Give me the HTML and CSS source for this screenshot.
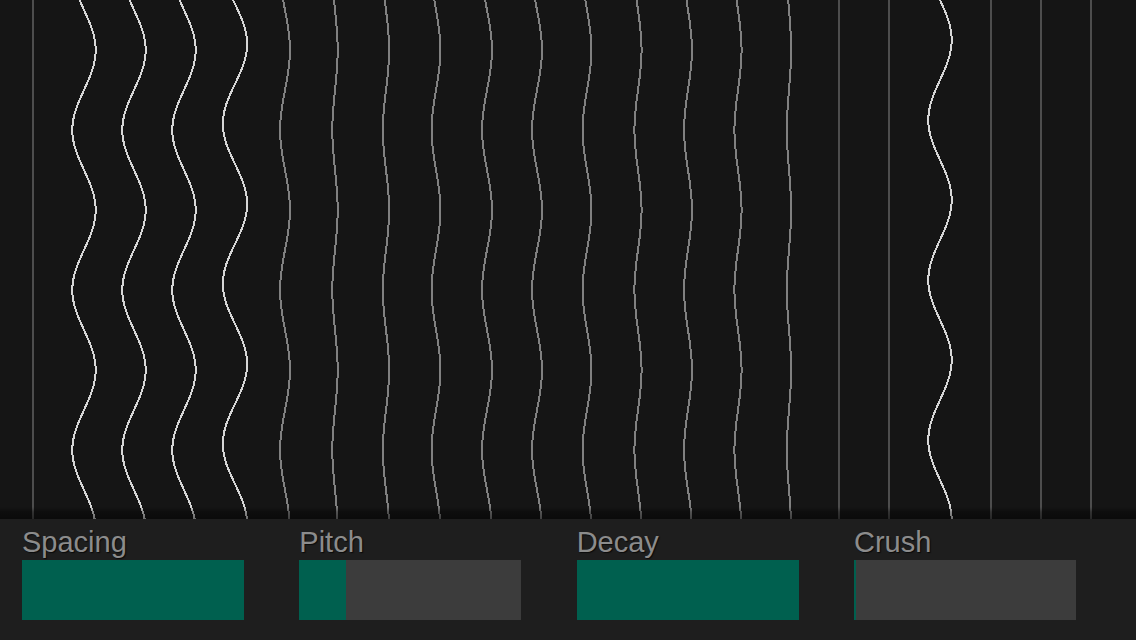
FILE: index.html
```html
<!DOCTYPE html>
<html>
<head>
<meta charset="utf-8">
<link rel="stylesheet" href="styles.css">
</head>
<body>
<div class="app">
  <div class="viz">
    <svg class="lines" width="1136" height="519" viewBox="0 0 1136 519" shape-rendering="crispEdges">
      <defs>
        <path id="w" fill="none" stroke-width="2" vector-effect="non-scaling-stroke"
          d="M0,-150 c5.123,13.04 10,25.52 10,40 s-4.877,26.96 -10,40 s-10,25.52 -10,40 s4.877,26.96 10,40
             s10,25.52 10,40 s-4.877,26.96 -10,40 s-10,25.52 -10,40 s4.877,26.96 10,40
             s10,25.52 10,40 s-4.877,26.96 -10,40 s-10,25.52 -10,40 s4.877,26.96 10,40
             s10,25.52 10,40 s-4.877,26.96 -10,40 s-10,25.52 -10,40 s4.877,26.96 10,40
             s10,25.52 10,40 s-4.877,26.96 -10,40 s-10,25.52 -10,40 s4.877,26.96 10,40"/>
      </defs>
      <g class="flat" stroke-width="2">
        <line x1="33" y1="0" x2="33" y2="519"/>
        <line x1="839" y1="0" x2="839" y2="519"/>
        <line x1="889" y1="0" x2="889" y2="519"/>
        <line x1="991" y1="0" x2="991" y2="519"/>
        <line x1="1041" y1="0" x2="1041" y2="519"/>
        <line x1="1091" y1="0" x2="1091" y2="519"/>
      </g>
      <g class="bright">
        <use href="#w" transform="translate(84,0) scale(1.17,1)"/>
        <use href="#w" transform="translate(134,0) scale(1.17,1)"/>
        <use href="#w" transform="translate(184,0) scale(1.17,1)"/>
        <use href="#w" transform="translate(235,-6) scale(1.22,1)"/>
        <use href="#w" transform="translate(940,-10) scale(1.17,1)"/>
      </g>
      <g class="mid">
        <use href="#w" transform="translate(285,0) scale(0.5,1)"/>
        <use href="#w" transform="translate(335,0) scale(0.27,1)"/>
        <use href="#w" transform="translate(386,0) scale(0.32,1)"/>
        <use href="#w" transform="translate(436,0) scale(0.45,1)"/>
        <use href="#w" transform="translate(487,0) scale(0.5,1)"/>
        <use href="#w" transform="translate(537,0) scale(0.5,1)"/>
        <use href="#w" transform="translate(587,0) scale(0.45,1)"/>
        <use href="#w" transform="translate(638,0) scale(0.36,1)"/>
        <use href="#w" transform="translate(688,0) scale(0.4,1)"/>
        <use href="#w" transform="translate(738,0) scale(0.36,1)"/>
        <use href="#w" transform="translate(789,0) scale(0.22,1)"/>
      </g>
    </svg>
    <div class="shade"></div>
  </div>
  <div class="panel">
    <div class="control">
      <div class="label">Spacing</div>
      <div class="track"><div class="fill" style="width:100%"></div></div>
    </div>
    <div class="control">
      <div class="label">Pitch</div>
      <div class="track"><div class="fill" style="width:21%"></div></div>
    </div>
    <div class="control">
      <div class="label">Decay</div>
      <div class="track"><div class="fill" style="width:100%"></div></div>
    </div>
    <div class="control">
      <div class="label">Crush</div>
      <div class="track"><div class="fill" style="width:1%"></div></div>
    </div>
  </div>
</div>
</body>
</html>
```

FILE: styles.css
```css
html, body {
  margin: 0;
  padding: 0;
  background: #151515;
}
.app {
  width: 1136px;
  height: 640px;
  display: flex;
  flex-direction: column;
  overflow: hidden;
  background: #151515;
}
.viz {
  position: relative;
  height: 519px;
  flex: none;
}
.lines {
  display: block;
}
.flat line {
  stroke: #4d4d4d;
}
.bright {
  stroke: #d6d6d6;
}
.mid {
  stroke: #808080;
}
.shade {
  position: absolute;
  left: 0;
  right: 0;
  bottom: 0;
  height: 12px;
  background: linear-gradient(to bottom, rgba(0,0,0,0) 0%, rgba(0,0,0,0.35) 40%, rgba(0,0,0,0.5) 100%);
}
.panel {
  flex: 1;
  background: #1e1e1e;
  display: grid;
  grid-template-columns: 222px 222px 222px 222px;
  column-gap: 56px 54px 56px;
  column-gap: 55.33px;
  padding: 9px 0 0 22px;
  align-content: start;
}
.control {
  display: flex;
  flex-direction: column;
  gap: 4px;
}
.label {
  font-family: "Liberation Sans", Arial, sans-serif;
  font-size: 29px;
  line-height: 28px;
  color: #8c8c8c;
  text-shadow: 1px 1px 1px #0a0a0a;
}
.track {
  height: 60px;
  background: #3c3c3c;
  display: flex;
}
.fill {
  background: #00604f;
  height: 100%;
}
```
